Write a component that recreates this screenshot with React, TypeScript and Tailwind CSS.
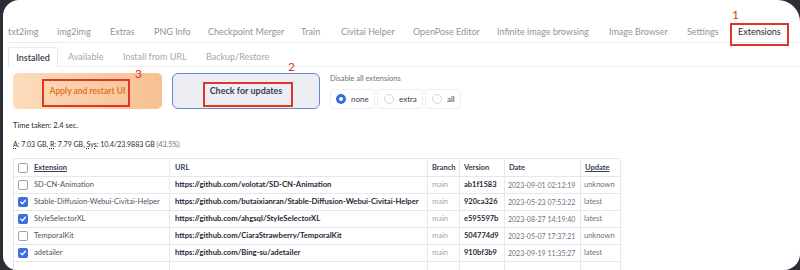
import React from 'react';

const topTabs = [
  { t: 'txt2img', w: 'w-[49px]' },
  { t: 'img2img', w: 'w-[53px]' },
  { t: 'Extras', w: 'w-[44px]' },
  { t: 'PNG Info', w: 'w-[54px]' },
  { t: 'Checkpoint Merger', w: 'w-[93px]' },
  { t: 'Train', w: 'w-[40px]' },
  { t: 'Civitai Helper', w: 'w-[72px]' },
  { t: 'OpenPose Editor', w: 'w-[84px]' },
  { t: 'Infinite image browsing', w: 'w-[112px]' },
  { t: 'Image Browser', w: 'w-[78px]' },
  { t: 'Settings', w: 'w-[51px]' },
];

const subTabs = [
  { t: 'Available', w: 'w-[55px]' },
  { t: 'Install from URL', w: 'w-[83px]' },
  { t: 'Backup/Restore', w: 'w-[80px]' },
];

const rows = [
  { on: false, name: 'SD-CN-Animation', url: 'https://github.com/volotat/SD-CN-Animation', ver: 'ab1f1583', date: '2023-09-01 02:12:19', upd: 'unknown' },
  { on: true, name: 'Stable-Diffusion-Webui-Civitai-Helper', url: 'https://github.com/butaixianran/Stable-Diffusion-Webui-Civitai-Helper', ver: '920ca326', date: '2023-05-23 07:53:22', upd: 'latest' },
  { on: true, name: 'StyleSelectorXL', url: 'https://github.com/ahgsql/StyleSelectorXL', ver: 'e595597b', date: '2023-08-27 14:19:40', upd: 'latest' },
  { on: false, name: 'TemporalKit', url: 'https://github.com/CiaraStrawberry/TemporalKit', ver: '504774d9', date: '2023-05-07 17:37:21', upd: 'unknown' },
  { on: true, name: 'adetailer', url: 'https://github.com/Bing-su/adetailer', ver: '910bf3b9', date: '2023-09-19 11:35:27', upd: 'latest' },
  { on: false, name: '', url: '', ver: '', date: '', upd: '' },
];

function Check({ on }: { on: boolean }) {
  if (on) {
    return (
      <span className="flex h-[10px] w-[10px] shrink-0 items-center justify-center rounded-[2px] bg-[#3b6fe3]">
        <svg width="8" height="8" viewBox="0 0 12 12" fill="none">
          <path d="M2.5 6.2 5 8.6 9.6 3.4" stroke="white" strokeWidth="2" strokeLinecap="round" strokeLinejoin="round" />
        </svg>
      </span>
    );
  }
  return <span className="h-[10px] w-[10px] shrink-0 rounded-[2px] border border-[#9ca3af] bg-white" />;
}

export default function App() {
  return (
    <div className="h-[270px] w-[800px] overflow-hidden bg-[#2b2e35] font-['Lato',sans-serif]">
      <div className="relative ml-[3px] h-full rounded-tl-[16px] rounded-tr-[22px] rounded-bl-[14px] rounded-br-[16px] bg-white">
        {/* top tabs */}
        <div className="flex h-[43px] items-end pl-[5px] text-[9px] leading-[12px] text-[#8f949c]">
          <div className="flex flex-1 border-b border-[#eceef2] pb-[4px]">
            {topTabs.map((tab) => (
              <span key={tab.t} className={tab.w}>
                {tab.t}
              </span>
            ))}
            <span className="text-[#1f2937]">Extensions</span>
          </div>
        </div>

        {/* sub tabs */}
        <div className="flex h-[24px] items-end pl-[5px] text-[9px] leading-[12px] text-[#a3a8b0]">
          <span className="flex h-[20px] w-[50px] items-center justify-center rounded-t-[3px] border border-b-0 border-[#e6e8ec] font-semibold text-[#374151]">
            Installed
          </span>
          <div className="flex h-[20px] flex-1 items-center border-b border-[#eceef2] pl-[10px]">
            {subTabs.map((tab) => (
              <span key={tab.t} className={tab.w}>
                {tab.t}
              </span>
            ))}
          </div>
        </div>

        {/* buttons */}
        <div className="mt-[6px] flex h-[37px] items-start gap-[10px] pl-[10px]">
          <button className="flex h-[36px] w-[149px] items-center justify-center rounded-[5px] bg-gradient-to-r from-[#fcdcbc] to-[#f7c092] text-[8.5px] font-bold text-[#e5732a]">
            Apply and restart UI
          </button>
          <button className="flex h-[36px] w-[148px] items-center justify-center rounded-[6px] border-[1.5px] border-[#6585d6] bg-[#eceef3] text-[9px] font-bold text-[#374151]">
            Check for updates
          </button>
          <div className="flex flex-col">
            <span className="pt-[1px] text-[7.5px] leading-[10px] text-[#6b7280]">Disable all extensions</span>
            <div className="mt-[5px] flex gap-[2px] text-[8px] text-[#374151]">
              <span className="flex h-[20px] w-[45px] items-center gap-[5px] rounded-[4px] border border-[#eceef2] pl-[5px]">
                <span className="h-[10px] w-[10px] rounded-full border-[3px] border-[#3a6be0] bg-white" />
                none
              </span>
              <span className="flex h-[20px] w-[46px] items-center gap-[5px] rounded-[4px] border border-[#eceef2] pl-[6px]">
                <span className="h-[10px] w-[10px] rounded-full border border-[#d1d5db] bg-white" />
                extra
              </span>
              <span className="flex h-[20px] w-[36px] items-center gap-[5px] rounded-[4px] border border-[#eceef2] pl-[6px]">
                <span className="h-[10px] w-[10px] rounded-full border border-[#d1d5db] bg-white" />
                all
              </span>
            </div>
          </div>
        </div>

        {/* stats */}
        <div className="pl-[10px] text-[7.5px] leading-[10px] text-[#1f2937]">
          <div className="mt-[11px]">Time taken: 2.4 sec.</div>
          <div className="mt-[8px] text-[7px]">
            <span className="underline decoration-dotted">A</span>: 7.03 GB, <span className="underline decoration-dotted">R</span>: 7.79 GB,{' '}
            <span className="underline decoration-dotted">Sys</span>: 10.4/23.9883 GB <span className="text-[#6b7280]">(43.5%)</span>
          </div>
        </div>

        {/* table */}
        <div className="ml-[10px] mt-[9px] w-[607px] text-[7.5px] text-[#4b5563]">
          <div className="grid grid-cols-[156px_258px_32px_45px_76px_40px] border-t border-l border-[#e5e7eb]">
            <div className="flex h-[18px] items-center gap-[6px] border-r border-b border-[#e5e7eb] pl-[4px] font-bold text-[#374151]">
              <Check on={false} />
              <span className="underline">Extension</span>
            </div>
            <div className="flex items-center border-r border-b border-[#e5e7eb] pl-[5px] font-bold text-[#374151]">URL</div>
            <div className="flex items-center border-r border-b border-[#e5e7eb] pl-[4px] font-bold text-[#374151]">Branch</div>
            <div className="flex items-center border-r border-b border-[#e5e7eb] pl-[4px] font-bold text-[#374151]">Version</div>
            <div className="flex items-center border-r border-b border-[#e5e7eb] pl-[4px] font-bold text-[#374151]">Date</div>
            <div className="flex items-center border-r border-b border-[#e5e7eb] pl-[4px] font-bold text-[#374151] underline">Update</div>
            {rows.map((r, i) => (
              <React.Fragment key={i}>
                <div className="flex h-[17px] items-center gap-[6px] overflow-hidden whitespace-nowrap border-r border-b border-[#e5e7eb] pl-[4px]">
                  {r.name && <Check on={r.on} />}
                  {r.name}
                </div>
                <div className="flex items-center overflow-hidden whitespace-nowrap border-r border-b border-[#e5e7eb] pl-[5px] text-[7.7px] font-bold text-[#1f2937]">
                  {r.url}
                </div>
                <div className="flex items-center border-r border-b border-[#e5e7eb] pl-[4px] text-[#9ca3af]">{r.name && 'main'}</div>
                <div className="flex items-center border-r border-b border-[#e5e7eb] pl-[4px] font-bold text-[#1f2937]">{r.ver}</div>
                <div className="flex items-center whitespace-nowrap border-r border-b border-[#e5e7eb] pl-[3px] text-[7px] text-[#6b7280]">{r.date}</div>
                <div className="flex items-center border-r border-b border-[#e5e7eb] pl-[3px] text-[#6b7280]">{r.upd}</div>
              </React.Fragment>
            ))}
          </div>
        </div>

        {/* annotations */}
        <div className="absolute left-[727px] top-[23px] h-[23px] w-[59px] border-2 border-[#e0352b]" />
        <span className="absolute left-[729px] top-[9px] text-[12px] leading-none text-[#e0352b]">1</span>
        <div className="absolute left-[200px] top-[82px] h-[25px] w-[90px] border-2 border-[#e0352b]" />
        <span className="absolute left-[285px] top-[61px] text-[12px] leading-none text-[#e0352b]">2</span>
        <div className="absolute left-[39px] top-[79px] h-[28px] w-[88px] border-2 border-[#e0352b]" />
        <span className="absolute left-[132px] top-[68px] text-[12px] leading-none text-[#e0352b]">3</span>
      </div>
    </div>
  );
}
